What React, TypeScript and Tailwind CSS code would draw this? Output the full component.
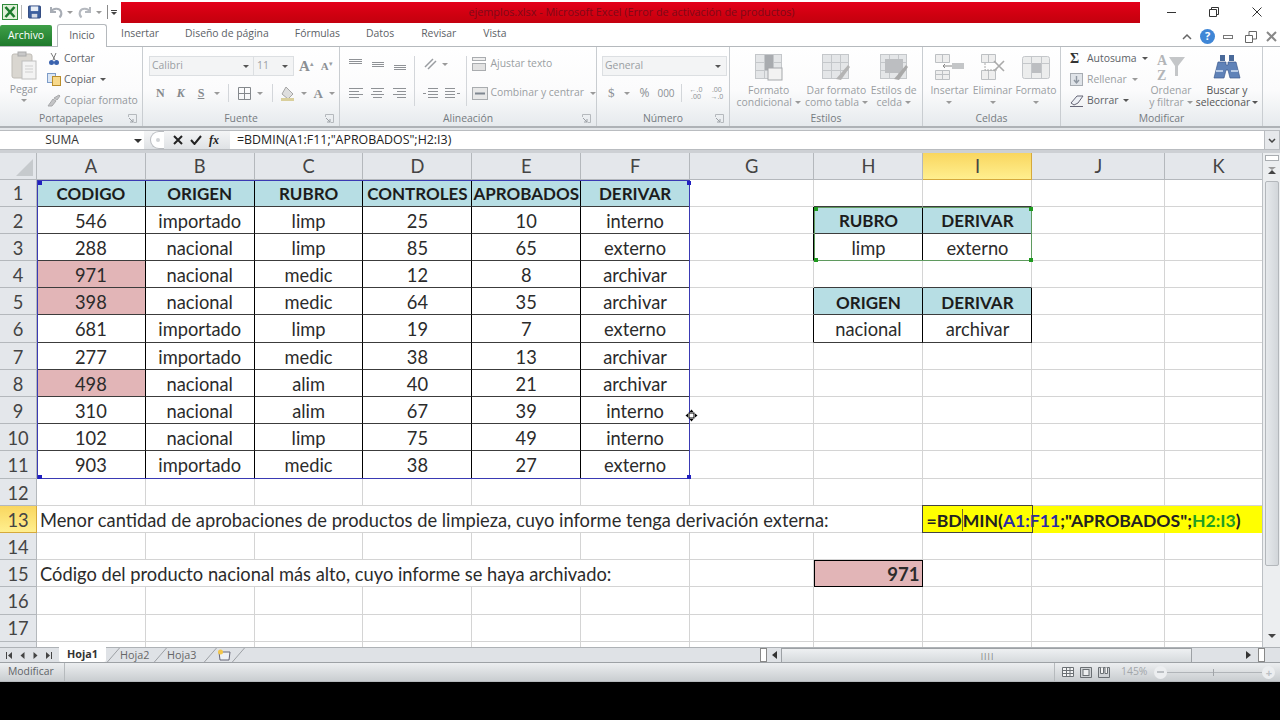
import type { ReactNode } from "react";

const cols = ["A", "B", "C", "D", "E", "F", "G", "H", "I", "J", "K"];

const tableRows = [
  ["CODIGO", "ORIGEN", "RUBRO", "CONTROLES", "APROBADOS", "DERIVAR"],
  ["546", "importado", "limp", "25", "10", "interno"],
  ["288", "nacional", "limp", "85", "65", "externo"],
  ["971", "nacional", "medic", "12", "8", "archivar"],
  ["398", "nacional", "medic", "64", "35", "archivar"],
  ["681", "importado", "limp", "19", "7", "externo"],
  ["277", "importado", "medic", "38", "13", "archivar"],
  ["498", "nacional", "alim", "40", "21", "archivar"],
  ["310", "nacional", "alim", "67", "39", "interno"],
  ["102", "nacional", "limp", "75", "49", "interno"],
  ["903", "importado", "medic", "38", "27", "externo"],
];

const sideTables: Record<string, string> = {
  "2-7": "RUBRO",
  "2-8": "DERIVAR",
  "3-7": "limp",
  "3-8": "externo",
  "5-7": "ORIGEN",
  "5-8": "DERIVAR",
  "6-7": "nacional",
  "6-8": "archivar",
};

const pinkRows = [4, 5, 8];

function inTable(row: number, col: number) {
  if (row >= 1 && row <= 11 && col >= 0 && col <= 5) return true;
  return sideTables[`${row}-${col}`] !== undefined;
}

function cellValue(row: number, col: number) {
  if (row <= 11 && col <= 5) return tableRows[row - 1][col];
  return sideTables[`${row}-${col}`] ?? "";
}

function Arrow({ className = "" }: { className?: string }) {
  return <span className={`inline-block h-0 w-0 border-x-[3px] border-t-[3px] border-x-transparent border-t-[#9a9a9a] ${className}`} />;
}

function Sep({ className = "" }: { className?: string }) {
  return <span className={`inline-block h-[18px] w-px bg-[#d3d6da] ${className}`} />;
}

function Launcher() {
  return (
    <svg width="9" height="9" viewBox="0 0 9 9" className="absolute right-[5px] top-[3px]">
      <path d="M0.5 3V0.5H8.5V8.5H5.5" fill="none" stroke="#b5b9bd" />
      <path d="M1 4L5 8M5 5V8H2" fill="none" stroke="#9ba0a5" />
    </svg>
  );
}

function Group({ className, label, launcher, children }: { className: string; label: string; launcher?: boolean; children: ReactNode }) {
  return (
    <div className={`flex shrink-0 flex-col border-r border-[#c9cdd1] ${className}`}>
      <div className="min-h-0 flex-1">{children}</div>
      <div className="relative flex h-[15px] items-center justify-center text-[10.4px] text-[#757b80]">
        {label}
        {launcher && <Launcher />}
      </div>
    </div>
  );
}

function Lines({ rows, color = "#8f9296" }: { rows: number[][]; color?: string }) {
  return (
    <svg width="16" height="14" viewBox="0 0 16 14">
      {rows.map(([a, b, y]) => (
        <line key={y} x1={a} x2={b} y1={y + 0.5} y2={y + 0.5} stroke={color} />
      ))}
    </svg>
  );
}

function GridTile({ children }: { children?: ReactNode }) {
  return (
    <svg width="30" height="28" viewBox="0 0 30 28">
      <g fill="#e4e6e8" stroke="#c4c7ca">
        <rect x="1.5" y="1.5" width="26" height="24" />
      </g>
      <path d="M1.5 9.5H27.5M1.5 17.5H27.5M10.5 1.5V25.5M19.5 1.5V25.5" stroke="#c4c7ca" fill="none" />
      {children}
    </svg>
  );
}

function BigTool({ icon, lines, className = "" }: { icon: ReactNode; lines: string[]; className?: string }) {
  return (
    <div className={`flex flex-col items-center ${className}`}>
      <div className="flex h-[30px] items-center">{icon}</div>
      <div className="mt-[2px] whitespace-nowrap text-center text-[10.4px] leading-[12px] text-[#9a9ea2]">
        {lines.map((l, i) => (
          <div key={l}>
            {l}
            {lines.length > 1 && i === lines.length - 1 && <Arrow className="mb-[2px] ml-[3px]" />}
          </div>
        ))}
        {lines.length === 1 && (
          <div>
            <Arrow className="mb-[2px]" />
          </div>
        )}
      </div>
    </div>
  );
}

function TitleBar() {
  return (
    <div className="flex h-[24px] items-center bg-white">
      <svg width="16" height="16" viewBox="0 0 16 16" className="ml-[2px]">
        <rect x="0.5" y="0.5" width="15" height="15" fill="#dff0d8" stroke="#2f8a3a" />
        <path d="M3.5 3L12.5 13M12.5 3L3.5 13" stroke="#1b7a2c" strokeWidth="2.6" />
      </svg>
      <span className="ml-[3px] h-[14px] w-px bg-[#b8b8b8]" />
      <svg width="13" height="14" viewBox="0 0 14 14" className="ml-[6px]">
        <rect x="0.5" y="0.5" width="13" height="13" rx="1" fill="#3c5f9e" stroke="#2a437a" />
        <rect x="3" y="1" width="8" height="5" fill="#e8eef6" />
        <rect x="4" y="9" width="6" height="4" fill="#d5dbe6" />
      </svg>
      <svg width="16" height="14" viewBox="0 0 16 14" className="ml-[7px]">
        <path d="M3 2V7H8M3 7C5 3 11 2.5 13 6.5C14 9 13 11 11.5 12.5" fill="none" stroke="#a8adb5" strokeWidth="2" />
      </svg>
      <Arrow className="ml-[3px]" />
      <svg width="16" height="14" viewBox="0 0 16 14" className="ml-[4px]">
        <path d="M13 2V7H8M13 7C11 3 5 2.5 3 6.5C2 9 3 11 4.5 12.5" fill="none" stroke="#b5b9bf" strokeWidth="2" />
      </svg>
      <Arrow className="ml-[3px]" />
      <span className="ml-[5px] h-[14px] w-px bg-[#8a8a8a]" />
      <span className="ml-[3px] flex flex-col items-center gap-px">
        <span className="h-px w-[6px] bg-[#444]" />
        <Arrow className="border-t-[#444]" />
      </span>
      <div className="ml-[4px] flex h-[21px] w-[1019px] items-center justify-center bg-[linear-gradient(#e4001a,#cf0010_60%,#c4000f)] pl-[2px] text-[10.8px] text-[#7d0a18]">
        ejemplos.xlsx  -  Microsoft Excel (Error de activación de productos)
      </div>
      <div className="ml-[27px] flex items-center">
        <span className="h-px w-[9px] bg-[#333]" />
        <svg width="10" height="10" viewBox="0 0 10 10" className="ml-[33px]">
          <path d="M0.5 2.5H7.5V9.5H0.5ZM2.5 2.5V0.5H9.5V7.5H7.5" fill="none" stroke="#333" />
        </svg>
        <svg width="10" height="10" viewBox="0 0 10 10" className="ml-[33px]">
          <path d="M0.5 0.5L9.5 9.5M9.5 0.5L0.5 9.5" stroke="#333" />
        </svg>
      </div>
    </div>
  );
}

function TabRow() {
  return (
    <div className="flex h-[23px] items-end border-b border-[#b5b9bd] bg-white text-[10.4px] text-[#5c6166]">
      <div className="flex h-[21px] w-[52px] items-center justify-center rounded-t-[2px] bg-[linear-gradient(#3f9f48,#1f7a2c)] text-white">Archivo</div>
      <div className="relative top-px ml-[5px] flex h-[23px] w-[50px] items-center justify-center rounded-t-[3px] border border-b-0 border-[#b5b9bd] bg-white">Inicio</div>
      <span className="mb-[4px] ml-[14px]">Insertar</span>
      <span className="mb-[4px] ml-[26px]">Diseño de página</span>
      <span className="mb-[4px] ml-[26px]">Fórmulas</span>
      <span className="mb-[4px] ml-[26px]">Datos</span>
      <span className="mb-[4px] ml-[27px]">Revisar</span>
      <span className="mb-[4px] ml-[27px]">Vista</span>
      <div className="mb-[2px] ml-auto flex items-center pr-[3px]">
        <svg width="10" height="8" viewBox="0 0 10 8">
          <path d="M1 6L5 2L9 6" fill="none" stroke="#666" strokeWidth="1.5" />
        </svg>
        <span className="ml-[8px] flex h-[15px] w-[15px] items-center justify-center rounded-full bg-[#3f86d6] text-[11px] font-bold text-white">?</span>
        <span className="ml-[8px] h-[4px] w-[10px] border border-[#777]" />
        <svg width="12" height="12" viewBox="0 0 12 12" className="ml-[12px]">
          <path d="M0.5 4.5H7.5V11.5H0.5ZM4 4V0.5H11.5V8H8" fill="none" stroke="#666" />
        </svg>
        <svg width="11" height="11" viewBox="0 0 11 11" className="ml-[9px]">
          <path d="M1 1L10 10M10 1L1 10" stroke="#888" strokeWidth="2" />
        </svg>
      </div>
    </div>
  );
}

function ClipboardGroup() {
  return (
    <Group className="w-[143px]" label="Portapapeles" launcher>
      <div className="flex">
        <div className="flex w-[47px] flex-col items-center pt-[4px]">
          <svg width="26" height="29" viewBox="0 0 26 29">
            <rect x="1" y="3" width="20" height="24" rx="2" fill="#d9d6d0" stroke="#bfbcb6" />
            <rect x="7" y="1" width="8" height="4" fill="#c8c8c8" stroke="#aaa" />
            <rect x="11" y="10" width="14" height="18" fill="#f3f3f3" stroke="#c0c0c0" />
            <path d="M14 15H22M14 18H22M14 21H22" stroke="#cfcfcf" />
          </svg>
          <span className="mt-[2px] text-[10.4px] leading-[14px] text-[#8f9397]">Pegar</span>
          <Arrow className="mt-[3px]" />
        </div>
        <div className="flex flex-col whitespace-nowrap pt-[1px] text-[10.4px] text-[#5c6166]">
          <div className="flex h-[21px] items-center">
            <svg width="14" height="14" viewBox="0 0 14 14">
              <path d="M4 1L8 8M9 1L6 8" stroke="#777" />
              <circle cx="4.5" cy="10.5" r="2.5" fill="#3a62ae" />
              <circle cx="9.5" cy="10.5" r="2.5" fill="#3a62ae" />
            </svg>
            <span className="ml-[3px]">Cortar</span>
          </div>
          <div className="flex h-[21px] items-center">
            <svg width="14" height="13" viewBox="0 0 14 13">
              <rect x="0.5" y="0.5" width="8" height="9" fill="#dbe6f4" stroke="#7d9cc8" />
              <rect x="5.5" y="3.5" width="8" height="9" fill="#f7d98c" stroke="#b98d2b" />
            </svg>
            <span className="ml-[3px]">Copiar</span>
            <Arrow className="ml-[4px] border-t-[#555]" />
          </div>
          <div className="flex h-[21px] items-center text-[#94989c]">
            <svg width="14" height="13" viewBox="0 0 14 13">
              <path d="M1 12L6 5L9 7L5 12ZM7 4L12 1L13 2L10 6Z" fill="#c3c4c6" stroke="#a8a9ab" />
            </svg>
            <span className="ml-[3px]">Copiar formato</span>
          </div>
        </div>
      </div>
    </Group>
  );
}

function FontGroup() {
  return (
    <Group className="w-[197px]" label="Fuente" launcher>
      <div className="pl-[6px] pt-[9px]">
        <div className="flex h-[20px] items-center text-[10.4px] text-[#9a9ea2]">
          <div className="flex h-full w-[105px] items-center justify-between border border-[#dcdfe2] bg-[#f3f4f5] px-[2px]">
            Calibri
            <Arrow className="mr-[2px] border-t-[#555]" />
          </div>
          <div className="flex h-full w-[40px] items-center justify-between border border-l-0 border-[#dcdfe2] bg-[#f3f4f5] px-[3px]">
            11
            <Arrow className="mr-[2px] border-t-[#555]" />
          </div>
          <span className="ml-[5px] font-['Liberation_Serif',serif] text-[15px] font-bold leading-none text-[#8b8f93]">A</span>
          <span className="mb-[6px] text-[7px] leading-none">▴</span>
          <span className="ml-[7px] font-['Liberation_Serif',serif] text-[11px] font-bold leading-none text-[#8b8f93]">A</span>
          <span className="mb-[6px] text-[7px] leading-none">▾</span>
        </div>
        <div className="mt-[7px] flex h-[20px] items-center text-[#85898d]">
          <span className="ml-[7px] font-['Liberation_Serif',serif] text-[12px] font-bold">N</span>
          <span className="ml-[12px] font-['Liberation_Serif',serif] text-[12px] font-bold italic">K</span>
          <span className="ml-[13px] font-['Liberation_Serif',serif] text-[12px] font-bold underline">S</span>
          <Arrow className="ml-[10px]" />
          <Sep className="ml-[8px]" />
          <svg width="13" height="13" viewBox="0 0 13 13" className="ml-[9px]">
            <path d="M0.5 0.5H12.5V12.5H0.5ZM6.5 0.5V12.5M0.5 6.5H12.5" fill="none" stroke="#84888c" />
          </svg>
          <Arrow className="ml-[6px]" />
          <Sep className="ml-[9px]" />
          <svg width="17" height="15" viewBox="0 0 17 15" className="ml-[7px]">
            <path d="M6 1L13 8L8 13L2 8Z" fill="#dedede" stroke="#a5a5a5" />
            <rect x="1" y="12" width="13" height="3" fill="#d9cf9c" />
          </svg>
          <Arrow className="ml-[4px]" />
          <span className="ml-[6px] font-['Liberation_Serif',serif] text-[13px] font-bold leading-none text-[#8b8f93]">A</span>
          <Arrow className="ml-[6px]" />
        </div>
      </div>
    </Group>
  );
}

function AlignGroup() {
  return (
    <Group className="w-[257px]" label="Alineación" launcher>
      <div className="flex pl-[8px] pt-[9px]">
        <div className="flex flex-col gap-[13px]">
          <div className="flex h-[16px] items-center gap-[6px]">
            <Lines rows={[[1, 14, 2], [1, 14, 4], [1, 14, 6]]} />
            <Lines rows={[[2, 14, 5], [2, 14, 7], [2, 14, 9]]} />
            <Lines rows={[[2, 14, 8], [2, 14, 10], [2, 14, 12]]} />
          </div>
          <div className="flex h-[16px] items-center gap-[6px]">
            <Lines rows={[[1, 15, 2], [1, 11, 5], [1, 15, 8], [1, 11, 11]]} />
            <Lines rows={[[1, 14, 2], [3, 12, 5], [1, 14, 8], [3, 12, 11]]} />
            <Lines rows={[[1, 14, 2], [5, 14, 5], [1, 14, 8], [5, 14, 11]]} />
          </div>
        </div>
        <Sep className="ml-[6px] h-[50px]" />
        <div className="ml-[8px] flex flex-col gap-[13px]">
          <div className="flex h-[16px] items-center">
            <svg width="17" height="14" viewBox="0 0 17 14">
              <path d="M2 10L10 2M5 12L13 4" stroke="#9a9da1" strokeWidth="1.5" />
            </svg>
            <Arrow className="ml-[2px]" />
          </div>
          <div className="flex h-[16px] items-center gap-[5px]">
            <Lines rows={[[5, 15, 2], [5, 15, 5], [0, 3, 7], [5, 15, 8], [5, 15, 11]]} />
            <Lines rows={[[1, 11, 2], [1, 11, 5], [13, 16, 7], [1, 11, 8], [1, 11, 11]]} />
          </div>
        </div>
        <Sep className="ml-[6px] h-[50px]" />
        <div className="ml-[6px] flex flex-col gap-[13px] whitespace-nowrap text-[10.4px] text-[#9a9ea2]">
          <div className="flex h-[16px] items-center">
            <svg width="16" height="14" viewBox="0 0 16 14">
              <rect x="0.5" y="0.5" width="13" height="3" fill="#eee" stroke="#a9acaf" />
              <rect x="0.5" y="6.5" width="13" height="7" fill="#e2e2e2" stroke="#a9acaf" />
            </svg>
            <span className="ml-[2px]">Ajustar texto</span>
          </div>
          <div className="flex h-[16px] items-center">
            <svg width="16" height="13" viewBox="0 0 16 13">
              <rect x="0.5" y="0.5" width="15" height="12" fill="#e8e8e8" stroke="#a9acaf" />
              <path d="M3 6.5H13" stroke="#7f8790" strokeWidth="2" />
            </svg>
            <span className="ml-[2px]">Combinar y centrar</span>
            <Arrow className="ml-[6px]" />
          </div>
        </div>
      </div>
    </Group>
  );
}

function NumberGroup() {
  return (
    <Group className="w-[133px]" label="Número" launcher>
      <div className="pl-[5px] pt-[9px]">
        <div className="flex h-[20px] w-[125px] items-center justify-between border border-[#dcdfe2] bg-[#f3f4f5] px-[2px] text-[10.4px] text-[#9a9ea2]">
          General
          <Arrow className="mr-[3px] border-t-[#555]" />
        </div>
        <div className="mt-[7px] flex h-[20px] items-center text-[#8b8f93]">
          <span className="ml-[6px] font-['Liberation_Serif',serif] text-[13px]">$</span>
          <Arrow className="ml-[9px]" />
          <span className="ml-[10px] text-[12px]">%</span>
          <span className="ml-[8px] text-[10px]">000</span>
          <Sep className="ml-[6px]" />
          <span className="ml-[8px] text-center text-[7px] leading-[7px]">←.0<br />.00</span>
          <span className="ml-[8px] text-center text-[7px] leading-[7px]">.00<br />→.0</span>
        </div>
      </div>
    </Group>
  );
}

function StylesGroup() {
  return (
    <Group className="w-[193px]" label="Estilos">
      <div className="flex pt-[5px]">
        <BigTool
          className="w-[78px]"
          lines={["Formato", "condicional"]}
          icon={
            <GridTile>
              <rect x="11" y="2" width="8" height="15" fill="#a8abaf" />
              <rect x="14" y="15" width="14" height="12" fill="#f2f2f2" stroke="#a5a8ab" />
            </GridTile>
          }
        />
        <BigTool
          className="w-[58px]"
          lines={["Dar formato", "como tabla"]}
          icon={
            <GridTile>
              <path d="M15 26L27 12L29 14L20 27Z" fill="#b4b4b4" />
            </GridTile>
          }
        />
        <BigTool
          className="w-[57px]"
          lines={["Estilos de", "celda"]}
          icon={
            <GridTile>
              <rect x="6" y="6" width="18" height="14" fill="#bcbec1" />
              <path d="M15 26L27 12L29 14L20 27Z" fill="#a9a9a9" />
            </GridTile>
          }
        />
      </div>
    </Group>
  );
}

function CellsGroup() {
  return (
    <Group className="w-[138px]" label="Celdas">
      <div className="flex pl-[5px] pt-[5px]">
        <BigTool
          className="w-[43px]"
          lines={["Insertar"]}
          icon={
            <svg width="30" height="26" viewBox="0 0 30 26">
              <path d="M0.5 0.5H14.5V8.5H0.5ZM0.5 16.5H14.5V25.5H0.5ZM7.5 0.5V8.5M7.5 16.5V25.5M0.5 20.5H14.5" fill="#eee" stroke="#bdc0c3" />
              <path d="M17 12H8M10 10L8 12L10 14" stroke="#888" fill="none" />
              <rect x="17" y="9" width="12" height="6" fill="#c4c6c8" />
            </svg>
          }
        />
        <BigTool
          className="w-[43px]"
          lines={["Eliminar"]}
          icon={
            <svg width="24" height="26" viewBox="0 0 24 26">
              <path d="M0.5 0.5H14.5V8.5H0.5ZM0.5 16.5H14.5V25.5H0.5ZM7.5 0.5V8.5M7.5 16.5V25.5" fill="#eee" stroke="#bdc0c3" />
              <path d="M4 9V16H16" fill="none" stroke="#aaa" strokeDasharray="2 1" />
              <path d="M13 7L23 17M23 7L13 17" stroke="#aaa" strokeWidth="1.6" />
            </svg>
          }
        />
        <BigTool
          className="w-[44px]"
          lines={["Formato"]}
          icon={
            <svg width="30" height="28" viewBox="0 0 30 28">
              <rect x="1.5" y="3.5" width="27" height="22" rx="2" fill="#eceded" stroke="#c4c7ca" />
              <path d="M10.5 3.5V25.5M20.5 3.5V25.5M1.5 10.5H28.5" stroke="#c4c7ca" />
              <rect x="11" y="10" width="9" height="10" fill="#bcbec1" />
            </svg>
          }
        />
      </div>
    </Group>
  );
}

function EditGroup() {
  return (
    <Group className="w-[202px]" label="Modificar">
      <div className="flex pl-[9px] pt-[1px]">
        <div className="flex w-[78px] shrink-0 flex-col whitespace-nowrap text-[10.4px] text-[#5c6166]">
          <div className="flex h-[21px] items-center">
            <span className="w-[17px] font-['Liberation_Serif',serif] text-[14px] font-bold leading-none text-[#333]">Σ</span>
            <span>Autosuma</span>
            <Arrow className="ml-[5px] border-t-[#555]" />
          </div>
          <div className="flex h-[21px] items-center text-[#9a9ea2]">
            <svg width="13" height="13" viewBox="0 0 13 13" className="mr-[4px]">
              <rect x="0.5" y="0.5" width="12" height="12" fill="#dfe3e8" stroke="#a7acb2" />
              <path d="M6.5 3V9M4 7L6.5 10L9 7" fill="none" stroke="#8f97a1" strokeWidth="1.4" />
            </svg>
            <span>Rellenar</span>
            <Arrow className="ml-[5px]" />
          </div>
          <div className="flex h-[21px] items-center">
            <svg width="14" height="12" viewBox="0 0 14 12" className="mr-[3px]">
              <path d="M1 8L7 1H13L8 8L4 10Z" fill="#eef1f6" stroke="#667" />
              <path d="M0 11.5H13" stroke="#667" />
            </svg>
            <span>Borrar</span>
            <Arrow className="ml-[5px] border-t-[#555]" />
          </div>
        </div>
        <BigTool
          className="w-[46px] shrink-0 pt-[4px]"
          lines={["Ordenar", "y filtrar"]}
          icon={
            <svg width="30" height="30" viewBox="0 0 30 30">
              <path d="M13 5H29L22 14V24H19V14Z" fill="#c4c6c8" />
              <text x="1" y="13" fontFamily="Liberation Serif" fontWeight="bold" fontSize="14" fill="#b3b5b8">A</text>
              <text x="1" y="28" fontFamily="Liberation Serif" fontWeight="bold" fontSize="14" fill="#b3b5b8">Z</text>
            </svg>
          }
        />
        <div className="ml-[6px] flex w-[54px] shrink-0 flex-col items-center pt-[4px]">
          <div className="flex h-[30px] items-center">
            <svg width="28" height="26" viewBox="0 0 28 26">
              <rect x="7" y="1" width="5" height="6" fill="#4a6a9a" />
              <rect x="16" y="1" width="5" height="6" fill="#4a6a9a" />
              <path d="M5 8H13V11H15V8H23L27 24H17L15 16H13L11 24H1Z" fill="#5f82b8" stroke="#3d5a8c" strokeWidth="0.7" />
              <path d="M3 17H10M18 17H25" stroke="#b8cbe6" strokeWidth="2" />
            </svg>
          </div>
          <div className="mt-[2px] whitespace-nowrap text-center text-[10.4px] leading-[12px] text-[#555]">
            <div>Buscar y</div>
            <div>
              seleccionar
              <Arrow className="mb-[2px] ml-[2px] border-t-[#555]" />
            </div>
          </div>
        </div>
      </div>
    </Group>
  );
}

function Ribbon() {
  return (
    <div className="flex h-[81px] border-b-[2px] border-[#aeb2b6] bg-[linear-gradient(#ffffff,#fbfbfc_55%,#e6eaed)] font-['Open_Sans',sans-serif]">
      <ClipboardGroup />
      <FontGroup />
      <AlignGroup />
      <NumberGroup />
      <StylesGroup />
      <CellsGroup />
      <EditGroup />
    </div>
  );
}

function FormulaBar() {
  return (
    <div className="flex h-[25px] items-stretch border-b-[3px] border-[#cdd0d4] bg-[#e4e7ea] pt-[2px] font-['Open_Sans',sans-serif]">
      <div className="relative flex w-[144px] items-center justify-center border-y border-[#b9bcc0] bg-white pr-[20px] text-[12px] text-[#333]">
        SUMA
        <Arrow className="absolute right-[2px] top-[8px] border-x-[4px] border-t-[4px] border-t-[#333]" />
      </div>
      <div className="flex w-[86px] items-center border-y border-[#b9bcc0] bg-[linear-gradient(#f4f5f6,#dfe2e5)] pl-[6px]">
        <span className="flex h-[18px] w-[14px] items-center justify-center rounded-l-full border border-r-0 border-[#b9bcc0] bg-white">
          <span className="h-[4px] w-[4px] rounded-full bg-[#d0d3d6]" />
        </span>
        <svg width="10" height="10" viewBox="0 0 10 10" className="ml-[9px]">
          <path d="M1 1L9 9M9 1L1 9" stroke="#222" strokeWidth="2" />
        </svg>
        <svg width="12" height="10" viewBox="0 0 12 10" className="ml-[7px]">
          <path d="M1 5L4.5 9L11 1" fill="none" stroke="#222" strokeWidth="2" />
        </svg>
        <span className="ml-[7px] font-['Liberation_Serif',serif] text-[12px] font-bold italic leading-none text-[#222]">fx</span>
      </div>
      <div className="flex flex-1 items-center border-y border-[#b9bcc0] bg-white pl-[7px] text-[12.4px] text-[#222]">
        =BDMIN(A1:F11;"APROBADOS";H2:I3)
      </div>
      <div className="flex w-[16px] items-center justify-center border border-[#b9bcc0] bg-[#e6e8eb]">
        <svg width="8" height="5" viewBox="0 0 8 5">
          <path d="M1 1L4 4L7 1" fill="none" stroke="#444" strokeWidth="1.5" />
        </svg>
      </div>
    </div>
  );
}

function Corner({ className }: { className: string }) {
  return <span className={`absolute z-20 h-[4px] w-[4px] ${className}`} />;
}

function Sheet() {
  const rows = Array.from({ length: 18 }, (_, i) => i + 1);
  return (
    <div className="relative grid h-[494px] min-w-0 flex-1 grid-cols-[37px_repeat(6,108.83px)_124.5px_109px_109px_133px_107px] grid-rows-[26.5px] auto-rows-[27.2px] overflow-hidden bg-white font-['Lato',sans-serif] text-[18.3px] leading-none text-[#2b2b2b]">
      <div className="flex items-end justify-end border-r border-b border-[#b4b8bc] bg-[#e4e7eb] p-[3px]">
        <span className="h-0 w-0 border-b-[17px] border-l-[17px] border-b-[#c6cacd] border-l-transparent" />
      </div>
      {cols.map((c) => (
        <div
          key={c}
          className={`flex items-center justify-center border-r border-b pt-[1px] text-[#444] ${
            c === "I"
              ? "border-[#d5a93c] bg-[linear-gradient(#f9d65f,#ffef8f)]"
              : "border-[#b4b8bc] bg-[#e4e7eb]"
          }`}
        >
          {c}
        </div>
      ))}
      {rows.map((r) => (
        <Row key={r} r={r} />
      ))}

      {/* rangos marcados de la formula */}
      <div className="pointer-events-none absolute inset-0 col-start-2 col-end-8 row-start-2 row-end-13 border border-[#3a3ab4]">
        <Corner className="left-0 top-0 bg-[#2020c0]" />
        <Corner className="right-[-2px] top-0 bg-[#2020c0]" />
        <Corner className="bottom-[-1px] left-0 bg-[#2020c0]" />
        <Corner className="bottom-[-1px] right-[-2px] bg-[#2020c0]" />
      </div>
      <div className="pointer-events-none absolute inset-0 col-start-9 col-end-11 row-start-3 row-end-5 border border-[#5f9a5f]">
        <Corner className="left-[-1px] top-[-1px] bg-[#1f9a1f]" />
        <Corner className="right-[-2px] top-[-1px] bg-[#1f9a1f]" />
        <Corner className="bottom-[-2px] left-[-1px] bg-[#1f9a1f]" />
        <Corner className="bottom-[-2px] right-[-2px] bg-[#1f9a1f]" />
      </div>

      {/* cursor del mouse */}
      <svg width="13" height="13" viewBox="0 0 13 13" className="pointer-events-none absolute left-[685px] top-[256px] z-30">
        <path d="M6.5 0.5L8.5 3H4.5ZM6.5 12.5L8.5 10H4.5ZM0.5 6.5L3 4.5V8.5ZM12.5 6.5L10 4.5V8.5Z" fill="#000" />
        <rect x="4" y="4" width="5" height="5" fill="#fff" stroke="#000" />
      </svg>
    </div>
  );
}

function Row({ r }: { r: number }) {
  const head = (
    <div
      className={`flex items-center justify-center border-r border-b pt-[2px] text-[#444] ${
        r === 13
          ? "border-[#d5a93c] bg-[linear-gradient(#f9d65f,#ffef8f)]"
          : "border-[#b4b8bc] bg-[#e4e7eb]"
      }`}
    >
      {r < 18 ? r : ""}
    </div>
  );

  if (r === 13) {
    return (
      <>
        {head}
        <div className="col-span-8 flex items-center whitespace-nowrap border-r border-b border-[#d4d4d4] pl-[3px] pt-[2px]">
          Menor cantidad de aprobaciones de productos de limpieza, cuyo informe tenga derivación externa:
        </div>
        <div className="relative col-span-3 flex items-center whitespace-nowrap bg-[#ffff00] pl-[3px] pt-[2px] text-[17.6px] font-bold text-[#222]">
          =BD
          <span className="h-[22px] w-px bg-[#7a6a30]" />
          MIN(
          <span className="text-[#2a2aa8]">A1:F11</span>
          ;"APROBADOS";
          <span className="text-[#22a022]">H2:I3</span>)
          <span className="absolute left-[-1px] top-[-1px] h-[28px] w-[111px] border border-[#444]" />
        </div>
      </>
    );
  }

  if (r === 15) {
    return (
      <>
        {head}
        <div className="col-span-6 flex items-center whitespace-nowrap border-r border-b border-[#d4d4d4] pl-[3px] pt-[2px]">
          Código del producto nacional más alto, cuyo informe se haya archivado:
        </div>
        <div className="border-r border-b border-[#d4d4d4]" />
        <div className="flex items-center justify-end border border-black bg-[#e2b5b7] pr-[3px] pt-[2px] text-[18.5px] font-bold">
          971
        </div>
        <div className="border-r border-b border-[#d4d4d4]" />
        <div className="border-r border-b border-[#d4d4d4]" />
        <div className="border-b border-[#d4d4d4]" />
      </>
    );
  }

  return (
    <>
      {head}
      {cols.map((_, c) => {
        const boxed = inTable(r, c);
        const isHeader = (r === 1 && c <= 5) || (boxed && (r === 2 || r === 5) && c >= 7);
        const isPink = c === 0 && pinkRows.includes(r);
        const rightDark = boxed || inTable(r, c + 1);
        const bottomDark = boxed || inTable(r + 1, c);
        return (
          <div
            key={c}
            className={`flex items-center justify-center border-r border-b pt-[2px] ${rightDark ? "border-r-black" : "border-r-[#d4d4d4]"} ${
              bottomDark ? "border-b-[#3c3c3c]" : "border-b-[#d4d4d4]"
            } ${isHeader ? "bg-[#b7dee4] text-[17px] font-bold text-[#1c1c1c]" : isPink ? "bg-[#e2b5b7]" : ""}`}
          >
            {boxed ? cellValue(r, c) : ""}
          </div>
        );
      })}
    </>
  );
}

function VScroll() {
  return (
    <div className="flex w-[18px] shrink-0 flex-col items-center border-l border-[#bcc0c4] bg-[#eceef0]">
      <span className="mt-[2px] h-[6px] w-[14px] border border-[#a9adb1] bg-white" />
      <Arrow className="mt-[6px] border-x-[4px] border-b-[4px] border-t-0 border-b-[#444]" />
      <div className="mt-[7px] h-[385px] w-[14px] rounded-[2px] border border-[#b3b7bb] bg-[linear-gradient(90deg,#e6e9ec,#d2d6da)]" />
      <Arrow className="mb-[9px] mt-auto border-x-[4px] border-t-[4px] border-t-[#444]" />
    </div>
  );
}

function NavIcon({ d }: { d: string }) {
  return (
    <svg width="7" height="7" viewBox="0 0 7 7">
      <path d={d} fill="#444" />
    </svg>
  );
}

function TabSlant() {
  return (
    <svg width="14" height="15" viewBox="0 0 14 15" className="shrink-0">
      <path d="M0.5 15L13.5 0" fill="none" stroke="#9da1a5" />
    </svg>
  );
}

function SheetTabs() {
  return (
    <div className="flex h-[16px] items-stretch border-b border-[#9da1a5] bg-[#dfe2e6] font-['Open_Sans',sans-serif] text-[10.8px] text-[#666]">
      <div className="flex w-[59px] shrink-0 items-center gap-[6px] border-t border-[#aeb2b6] pl-[6px]">
        <NavIcon d="M0 0H1V7H0ZM6 0V7L2 3.5Z" />
        <NavIcon d="M5.5 0V7L1.5 3.5Z" />
        <NavIcon d="M1.5 0V7L5.5 3.5Z" />
        <NavIcon d="M6 0H7V7H6ZM1 0V7L5 3.5Z" />
      </div>
      <div className="flex w-[47px] shrink-0 items-center justify-center rounded-b-[2px] bg-white font-bold text-[#333]">Hoja1</div>
      <div className="flex w-[47px] shrink-0 items-center border-t border-[#aeb2b6]">
        <TabSlant />
        <span>Hoja2</span>
      </div>
      <div className="flex w-[50px] shrink-0 items-center border-t border-[#aeb2b6]">
        <TabSlant />
        <span>Hoja3</span>
      </div>
      <div className="flex w-[46px] shrink-0 items-center border-t border-[#aeb2b6]">
        <TabSlant />
        <svg width="14" height="12" viewBox="0 0 14 12" className="shrink-0">
          <path d="M2 3H13L12 11H3Z" fill="#eef1f6" stroke="#667" />
          <circle cx="3.5" cy="3" r="2.5" fill="#f3c64b" />
        </svg>
        <TabSlant />
      </div>
      <div className="flex flex-1 items-center border-t border-[#aeb2b6]">
        <span className="ml-[511px] h-[14px] w-[7px] border border-[#888] bg-white" />
        <span className="ml-[5px] h-0 w-0 border-y-[4px] border-r-[5px] border-y-transparent border-r-[#333]" />
        <span className="ml-[4px] flex h-[15px] w-[411px] items-center justify-center border border-[#9da1a5] bg-[linear-gradient(#eef0f2,#d6dadd)] text-[8px] leading-none tracking-[-1px]">||||</span>
        <span className="ml-[54px] h-0 w-0 border-y-[4px] border-l-[5px] border-y-transparent border-l-[#333]" />
        <span className="ml-[7px] h-[14px] w-[7px] border border-[#888] bg-white" />
      </div>
    </div>
  );
}

function StatusBar() {
  return (
    <div className="flex h-[19px] items-center border-b border-[#b6babd] bg-[linear-gradient(#eceef0,#c9cdd0)] font-['Open_Sans',sans-serif] text-[10.4px] text-[#5f6468]">
      <div className="flex h-full w-[65px] items-center border-r border-[#b6babd] pl-[8px]">Modificar</div>
      <div className="ml-[989px] flex h-full items-center border-l border-[#b6babd] pl-[7px]">
        <svg width="12" height="10" viewBox="0 0 12 10">
          <path d="M0.5 0.5H11.5V9.5H0.5ZM4.5 0.5V9.5M8 0.5V9.5M0.5 3.5H11.5M0.5 6.5H11.5" fill="#f4f5f6" stroke="#6b7074" />
        </svg>
        <svg width="12" height="11" viewBox="0 0 12 11" className="ml-[6px]">
          <path d="M0.5 0.5H11.5V10.5H0.5Z" fill="#cfd2d5" stroke="#6b7074" />
          <rect x="3" y="2.5" width="6" height="6" fill="#eef0f1" stroke="#6b7074" />
        </svg>
        <svg width="12" height="11" viewBox="0 0 12 11" className="ml-[6px]">
          <path d="M0.5 0.5H11.5V10.5H0.5Z" fill="#cfd2d5" stroke="#6b7074" />
          <path d="M2.5 0.5V6.5H5.5V0.5M7 0.5V6.5H9.5V0.5" fill="#f6f6f6" stroke="#6b7074" />
        </svg>
        <span className="ml-[11px] text-[#a2a6aa]">145%</span>
        <span className="ml-[7px] flex h-[13px] w-[13px] items-center justify-center rounded-full bg-[#eceef0]">
          <span className="h-[2px] w-[7px] bg-[#bcc0c4]" />
        </span>
        <span className="relative h-px w-[95px] bg-[#b0b4b8]">
          <span className="absolute left-[46px] top-[-3px] h-[7px] w-px bg-[#a0a4a8]" />
        </span>
        <span className="flex h-[13px] w-[13px] items-center justify-center rounded-full bg-[#eceef0] text-[11px] font-bold leading-none text-[#bcc0c4]">+</span>
      </div>
    </div>
  );
}

export default function App() {
  return (
    <div className="flex h-[720px] w-[1280px] flex-col overflow-hidden bg-black font-['Open_Sans',sans-serif]">
      <TitleBar />
      <TabRow />
      <Ribbon />
      <FormulaBar />
      <div className="flex bg-white">
        <Sheet />
        <VScroll />
      </div>
      <SheetTabs />
      <StatusBar />
    </div>
  );
}
